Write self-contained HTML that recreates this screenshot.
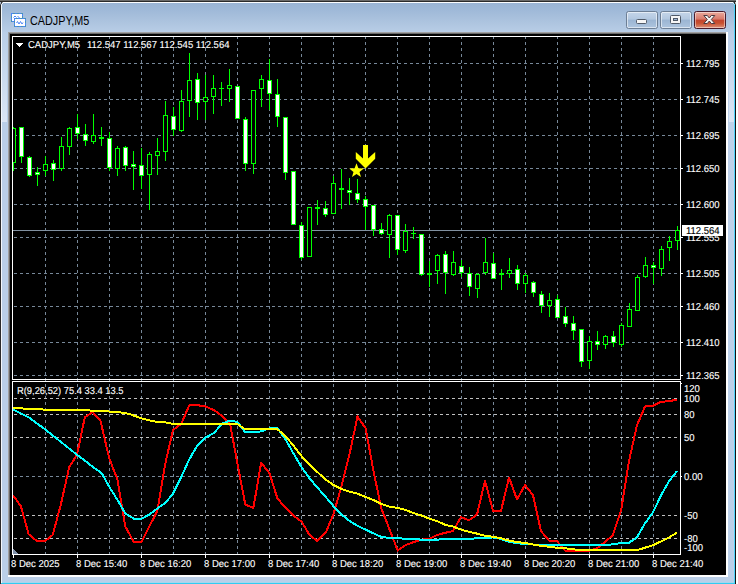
<!DOCTYPE html>
<html><head><meta charset="utf-8"><title>CADJPY,M5</title>
<style>
html,body{margin:0;padding:0;background:#fff;}
body{width:738px;height:584px;overflow:hidden;font-family:"Liberation Sans",sans-serif;}
#win{position:absolute;left:0;top:0;width:738px;height:584px;overflow:hidden;background:#bacfe8;}
#tb{position:absolute;left:0;top:0;width:738px;height:34px;background:linear-gradient(to bottom,#98b3d3 0px,#9fb9d8 10px,#adc4df 22px,#b8cde6 32px);}
.edge{position:absolute;}
#client{position:absolute;left:10px;top:34px;width:716px;height:541px;background:#000;}
.t{position:absolute;color:#fff;font-size:10px;line-height:12px;white-space:nowrap;transform-origin:0 0;transform:scaleX(0.95);text-rendering:geometricPrecision;-webkit-text-stroke:0.12px #fff;}
#title{position:absolute;left:30px;top:12px;font-size:12px;line-height:16px;color:#000;white-space:nowrap;transform-origin:0 0;transform:translateY(0.5px) scaleX(0.9);}
.btn{position:absolute;top:11px;height:18px;border-radius:2.5px;box-sizing:border-box;}
</style></head><body>
<div id="win">
<div id="tb"></div>
<!-- outer edges -->
<div class="edge" style="left:0;top:0;width:736px;height:1px;background:#6a6a6a"></div>
<div class="edge" style="left:0;top:1px;width:736px;height:1px;background:#2b2b2b"></div>
<div class="edge" style="left:2px;top:2px;width:732px;height:1px;background:#fbfdff"></div>
<div class="edge" style="left:0;top:2px;width:1px;height:582px;background:#2b2b2b"></div>
<div class="edge" style="left:1px;top:3px;width:1px;height:580px;background:#f4f8fc"></div>
<div class="edge" style="left:2px;top:32px;width:5px;height:90px;background:linear-gradient(to bottom,#b9cee7 0,#dbe6f4 100%)"></div>
<div class="edge" style="left:728px;top:34px;width:1px;height:543px;background:#bcd0ea"></div>
<div class="edge" style="left:729px;top:34px;width:4px;height:543px;background:linear-gradient(to bottom,#b9cee7 0,#dbe6f4 88px,#bed2ea 88px,#bacfe8 100%)"></div>
<div class="edge" style="left:733px;top:34px;width:1px;height:543px;background:linear-gradient(to bottom,#bccde6 0,#dfe2f0 88px,#c4d3ea 88px,#c0d0e8 100%)"></div>
<div class="edge" style="left:734px;top:3px;width:1px;height:581px;background:#4fd4fb"></div>
<div class="edge" style="left:735px;top:2px;width:1px;height:582px;background:#141414"></div>
<div class="edge" style="left:736px;top:0;width:2px;height:584px;background:#fff"></div>
<div class="edge" style="left:1px;top:583px;width:734px;height:1px;background:#30ccf2"></div>
<div class="edge" style="left:2px;top:582px;width:732px;height:1px;background:#a5d6ee"></div>
<!-- corners -->
<svg class="edge" style="left:0;top:0" width="738" height="8" viewBox="0 0 738 8" shape-rendering="crispEdges">
<rect x="0" y="2" width="1" height="1" fill="#b4c0d2"/><rect x="0" y="3" width="1" height="1" fill="#9aa6b8"/><rect x="0" y="4" width="1" height="1" fill="#555a62"/>
<rect x="1" y="2" width="1" height="1" fill="#333"/><rect x="1" y="3" width="1" height="1" fill="#4a4e55"/><rect x="1" y="4" width="1" height="1" fill="#d8e0ea"/>
<rect x="2" y="2" width="1" height="1" fill="#8a94a2"/><rect x="2" y="3" width="1" height="1" fill="#eef3f8"/>
<rect x="735" y="2" width="1" height="1" fill="#d0d0d0"/><rect x="735" y="3" width="1" height="1" fill="#9a9a9a"/><rect x="735" y="4" width="1" height="1" fill="#4a4a4a"/>
<rect x="734" y="2" width="1" height="1" fill="#333"/><rect x="734" y="3" width="1" height="1" fill="#2a3a44"/><rect x="734" y="4" width="1" height="1" fill="#7adcf8"/>
<rect x="733" y="2" width="1" height="1" fill="#8a94a2"/><rect x="733" y="3" width="1" height="1" fill="#bfeaf8"/>
</svg>
<!-- sunken client edge -->
<div class="edge" style="left:8px;top:32px;width:720px;height:545px;background:#fff"></div>
<div class="edge" style="left:8px;top:32px;width:718px;height:543px;background:#a0a0a0"></div>
<div class="edge" style="left:9px;top:33px;width:717px;height:542px;background:#696969"></div>
<div id="client"></div>
<!-- title -->
<svg class="edge" style="left:11px;top:13px" width="16" height="15" viewBox="0 0 16 15">
<rect x="0.5" y="0.5" width="11" height="8" fill="#fdfdff" stroke="#4a86f7"/>
<rect x="0.5" y="0.5" width="11" height="8" fill="none" stroke="#46a070" stroke-dasharray="1 3" stroke-dashoffset="-2"/>
<path d="M2.5 4.5 L4 3 L5.5 4.5 M6.5 3 L8.5 5" fill="none" stroke="#4a86f7" stroke-width="1"/>
<rect x="3.5" y="5.5" width="11" height="8" fill="#fdfdff" stroke="#4a86f7"/>
<rect x="3.5" y="5.5" width="11" height="8" fill="none" stroke="#46a070" stroke-dasharray="1 3" stroke-dashoffset="-2"/>
<path d="M5.5 10 L6.5 8.5 L8 11 L9.5 8.5 L11 11 L12 9.5" fill="none" stroke="#4a86f7" stroke-width="1"/>
</svg>
<div id="title">CADJPY,M5</div>
<!-- buttons -->
<div class="btn" style="left:626px;width:32px;border:1px solid #6d7f95;background:linear-gradient(to bottom,#c4d5e9 0,#b3c8e0 45%,#9bb5d3 50%,#aec5df 100%);box-shadow:inset 0 0 0 1px rgba(255,255,255,.55)"></div>
<div class="btn" style="left:660px;width:32px;border:1px solid #6d7f95;background:linear-gradient(to bottom,#c4d5e9 0,#b3c8e0 45%,#9bb5d3 50%,#aec5df 100%);box-shadow:inset 0 0 0 1px rgba(255,255,255,.55)"></div>
<div class="btn" style="left:694px;width:32px;border:1px solid #4a1a2a;background:linear-gradient(to bottom,#e9a99c 0,#d8796a 45%,#c2452f 50%,#c8502f 70%,#dc917a 100%);box-shadow:inset 0 0 0 1px rgba(255,255,255,.45)"></div>
<svg class="edge" style="left:0;top:0" width="738" height="40" viewBox="0 0 738 40">
<rect x="636.5" y="19.5" width="10" height="4" fill="#f6f6f6" stroke="#505a68" rx="1"/>
<rect x="670.5" y="15.5" width="10" height="8" fill="#f6f6f6" stroke="#505a68" rx="1"/>
<rect x="673.5" y="18.5" width="4" height="2" fill="#9db4d2" stroke="#505a68"/>
<path d="M703.8 15.5 L707.3 15.5 L709.3 18 L711.3 15.5 L714.8 15.5 L711.3 19.5 L714.8 23.5 L711.3 23.5 L709.3 21 L707.3 23.5 L703.8 23.5 L707.3 19.5 Z" fill="#f6f6f6" stroke="#4a3a40" stroke-width="1" stroke-linejoin="round"/>
</svg>
<!-- chart -->
<svg class="edge" style="left:0;top:0" width="738" height="584" viewBox="0 0 738 584" shape-rendering="crispEdges">
<line x1="14" y1="63.5" x2="680" y2="63.5" stroke="#778899" stroke-dasharray="3 3"/>
<line x1="14" y1="99.5" x2="680" y2="99.5" stroke="#778899" stroke-dasharray="3 3"/>
<line x1="14" y1="135.5" x2="680" y2="135.5" stroke="#778899" stroke-dasharray="3 3"/>
<line x1="14" y1="168.5" x2="680" y2="168.5" stroke="#778899" stroke-dasharray="3 3"/>
<line x1="14" y1="204.5" x2="680" y2="204.5" stroke="#778899" stroke-dasharray="3 3"/>
<line x1="14" y1="237.5" x2="680" y2="237.5" stroke="#778899" stroke-dasharray="3 3"/>
<line x1="14" y1="273.5" x2="680" y2="273.5" stroke="#778899" stroke-dasharray="3 3"/>
<line x1="14" y1="306.5" x2="680" y2="306.5" stroke="#778899" stroke-dasharray="3 3"/>
<line x1="14" y1="342.5" x2="680" y2="342.5" stroke="#778899" stroke-dasharray="3 3"/>
<line x1="14" y1="375.5" x2="680" y2="375.5" stroke="#778899" stroke-dasharray="3 3"/>
<line x1="45.5" y1="36" x2="45.5" y2="379" stroke="#778899" stroke-dasharray="3 3"/>
<line x1="45.5" y1="378" x2="45.5" y2="554" stroke="#778899" stroke-dasharray="3 3"/>
<line x1="77.5" y1="36" x2="77.5" y2="379" stroke="#778899" stroke-dasharray="3 3"/>
<line x1="77.5" y1="378" x2="77.5" y2="554" stroke="#778899" stroke-dasharray="3 3"/>
<line x1="109.5" y1="36" x2="109.5" y2="379" stroke="#778899" stroke-dasharray="3 3"/>
<line x1="109.5" y1="378" x2="109.5" y2="554" stroke="#778899" stroke-dasharray="3 3"/>
<line x1="141.5" y1="36" x2="141.5" y2="379" stroke="#778899" stroke-dasharray="3 3"/>
<line x1="141.5" y1="378" x2="141.5" y2="554" stroke="#778899" stroke-dasharray="3 3"/>
<line x1="173.5" y1="36" x2="173.5" y2="379" stroke="#778899" stroke-dasharray="3 3"/>
<line x1="173.5" y1="378" x2="173.5" y2="554" stroke="#778899" stroke-dasharray="3 3"/>
<line x1="205.5" y1="36" x2="205.5" y2="379" stroke="#778899" stroke-dasharray="3 3"/>
<line x1="205.5" y1="378" x2="205.5" y2="554" stroke="#778899" stroke-dasharray="3 3"/>
<line x1="237.5" y1="36" x2="237.5" y2="379" stroke="#778899" stroke-dasharray="3 3"/>
<line x1="237.5" y1="378" x2="237.5" y2="554" stroke="#778899" stroke-dasharray="3 3"/>
<line x1="269.5" y1="36" x2="269.5" y2="379" stroke="#778899" stroke-dasharray="3 3"/>
<line x1="269.5" y1="378" x2="269.5" y2="554" stroke="#778899" stroke-dasharray="3 3"/>
<line x1="301.5" y1="36" x2="301.5" y2="379" stroke="#778899" stroke-dasharray="3 3"/>
<line x1="301.5" y1="378" x2="301.5" y2="554" stroke="#778899" stroke-dasharray="3 3"/>
<line x1="333.5" y1="36" x2="333.5" y2="379" stroke="#778899" stroke-dasharray="3 3"/>
<line x1="333.5" y1="378" x2="333.5" y2="554" stroke="#778899" stroke-dasharray="3 3"/>
<line x1="365.5" y1="36" x2="365.5" y2="379" stroke="#778899" stroke-dasharray="3 3"/>
<line x1="365.5" y1="378" x2="365.5" y2="554" stroke="#778899" stroke-dasharray="3 3"/>
<line x1="397.5" y1="36" x2="397.5" y2="379" stroke="#778899" stroke-dasharray="3 3"/>
<line x1="397.5" y1="378" x2="397.5" y2="554" stroke="#778899" stroke-dasharray="3 3"/>
<line x1="429.5" y1="36" x2="429.5" y2="379" stroke="#778899" stroke-dasharray="3 3"/>
<line x1="429.5" y1="378" x2="429.5" y2="554" stroke="#778899" stroke-dasharray="3 3"/>
<line x1="461.5" y1="36" x2="461.5" y2="379" stroke="#778899" stroke-dasharray="3 3"/>
<line x1="461.5" y1="378" x2="461.5" y2="554" stroke="#778899" stroke-dasharray="3 3"/>
<line x1="493.5" y1="36" x2="493.5" y2="379" stroke="#778899" stroke-dasharray="3 3"/>
<line x1="493.5" y1="378" x2="493.5" y2="554" stroke="#778899" stroke-dasharray="3 3"/>
<line x1="525.5" y1="36" x2="525.5" y2="379" stroke="#778899" stroke-dasharray="3 3"/>
<line x1="525.5" y1="378" x2="525.5" y2="554" stroke="#778899" stroke-dasharray="3 3"/>
<line x1="557.5" y1="36" x2="557.5" y2="379" stroke="#778899" stroke-dasharray="3 3"/>
<line x1="557.5" y1="378" x2="557.5" y2="554" stroke="#778899" stroke-dasharray="3 3"/>
<line x1="589.5" y1="36" x2="589.5" y2="379" stroke="#778899" stroke-dasharray="3 3"/>
<line x1="589.5" y1="378" x2="589.5" y2="554" stroke="#778899" stroke-dasharray="3 3"/>
<line x1="621.5" y1="36" x2="621.5" y2="379" stroke="#778899" stroke-dasharray="3 3"/>
<line x1="621.5" y1="378" x2="621.5" y2="554" stroke="#778899" stroke-dasharray="3 3"/>
<line x1="653.5" y1="36" x2="653.5" y2="379" stroke="#778899" stroke-dasharray="3 3"/>
<line x1="653.5" y1="378" x2="653.5" y2="554" stroke="#778899" stroke-dasharray="3 3"/>
<line x1="14" y1="398.5" x2="680" y2="398.5" stroke="#c0c0c0" stroke-dasharray="3 3"/>
<line x1="14" y1="414.5" x2="680" y2="414.5" stroke="#c0c0c0" stroke-dasharray="3 3"/>
<line x1="14" y1="437.5" x2="680" y2="437.5" stroke="#c0c0c0" stroke-dasharray="3 3"/>
<line x1="14" y1="476.5" x2="680" y2="476.5" stroke="#778899" stroke-dasharray="3 3"/>
<line x1="14" y1="515.5" x2="680" y2="515.5" stroke="#c0c0c0" stroke-dasharray="3 3"/>
<line x1="14" y1="538.5" x2="680" y2="538.5" stroke="#c0c0c0" stroke-dasharray="3 3"/>
<rect x="13" y="230" width="667" height="1" fill="#8090a0"/>
<rect x="13" y="127" width="1" height="44" fill="#00ff00"/>
<rect x="13" y="128" width="3" height="35" fill="#00ff00"/>
<rect x="13" y="129" width="2" height="33" fill="#000"/>
<rect x="21" y="127" width="1" height="36" fill="#00ff00"/>
<rect x="19" y="127" width="5" height="30" fill="#00ff00"/>
<rect x="20" y="128" width="3" height="28" fill="#fff"/>
<rect x="29" y="156" width="1" height="21" fill="#00ff00"/>
<rect x="27" y="157" width="5" height="19" fill="#00ff00"/>
<rect x="28" y="158" width="3" height="17" fill="#fff"/>
<rect x="37" y="167" width="1" height="19" fill="#00ff00"/>
<rect x="35" y="172" width="5" height="3" fill="#00ff00"/>
<rect x="36" y="173" width="3" height="1" fill="#fff"/>
<rect x="45" y="156" width="1" height="20" fill="#00ff00"/>
<rect x="43" y="164" width="5" height="7" fill="#00ff00"/>
<rect x="44" y="165" width="3" height="5" fill="#000"/>
<rect x="53" y="160" width="1" height="21" fill="#00ff00"/>
<rect x="51" y="163" width="5" height="7" fill="#00ff00"/>
<rect x="52" y="164" width="3" height="5" fill="#fff"/>
<rect x="61" y="137" width="1" height="34" fill="#00ff00"/>
<rect x="59" y="146" width="5" height="23" fill="#00ff00"/>
<rect x="60" y="147" width="3" height="21" fill="#000"/>
<rect x="69" y="127" width="1" height="28" fill="#00ff00"/>
<rect x="67" y="128" width="5" height="19" fill="#00ff00"/>
<rect x="68" y="129" width="3" height="17" fill="#000"/>
<rect x="77" y="114" width="1" height="25" fill="#00ff00"/>
<rect x="75" y="127" width="5" height="7" fill="#00ff00"/>
<rect x="76" y="128" width="3" height="5" fill="#fff"/>
<rect x="85" y="124" width="1" height="22" fill="#00ff00"/>
<rect x="83" y="134" width="5" height="7" fill="#00ff00"/>
<rect x="84" y="135" width="3" height="5" fill="#fff"/>
<rect x="93" y="114" width="1" height="30" fill="#00ff00"/>
<rect x="91" y="135" width="5" height="7" fill="#00ff00"/>
<rect x="92" y="136" width="3" height="5" fill="#000"/>
<rect x="101" y="127" width="1" height="19" fill="#00ff00"/>
<rect x="99" y="137" width="5" height="2" fill="#00ff00"/>
<rect x="109" y="132" width="1" height="39" fill="#00ff00"/>
<rect x="107" y="138" width="5" height="30" fill="#00ff00"/>
<rect x="108" y="139" width="3" height="28" fill="#fff"/>
<rect x="117" y="146" width="1" height="30" fill="#00ff00"/>
<rect x="115" y="148" width="5" height="21" fill="#00ff00"/>
<rect x="116" y="149" width="3" height="19" fill="#000"/>
<rect x="125" y="146" width="1" height="25" fill="#00ff00"/>
<rect x="123" y="147" width="5" height="19" fill="#00ff00"/>
<rect x="124" y="148" width="3" height="17" fill="#fff"/>
<rect x="133" y="151" width="1" height="39" fill="#00ff00"/>
<rect x="131" y="164" width="5" height="3" fill="#00ff00"/>
<rect x="132" y="165" width="3" height="1" fill="#fff"/>
<rect x="141" y="148" width="1" height="41" fill="#00ff00"/>
<rect x="139" y="165" width="5" height="11" fill="#00ff00"/>
<rect x="140" y="166" width="3" height="9" fill="#fff"/>
<rect x="149" y="152" width="1" height="58" fill="#00ff00"/>
<rect x="147" y="154" width="5" height="21" fill="#00ff00"/>
<rect x="148" y="155" width="3" height="19" fill="#000"/>
<rect x="157" y="138" width="1" height="37" fill="#00ff00"/>
<rect x="155" y="151" width="5" height="5" fill="#00ff00"/>
<rect x="156" y="152" width="3" height="3" fill="#000"/>
<rect x="165" y="101" width="1" height="60" fill="#00ff00"/>
<rect x="163" y="115" width="5" height="37" fill="#00ff00"/>
<rect x="164" y="116" width="3" height="35" fill="#000"/>
<rect x="173" y="107" width="1" height="29" fill="#00ff00"/>
<rect x="171" y="116" width="5" height="14" fill="#00ff00"/>
<rect x="172" y="117" width="3" height="12" fill="#fff"/>
<rect x="181" y="90" width="1" height="42" fill="#00ff00"/>
<rect x="179" y="101" width="5" height="30" fill="#00ff00"/>
<rect x="180" y="102" width="3" height="28" fill="#000"/>
<rect x="189" y="53" width="1" height="64" fill="#00ff00"/>
<rect x="187" y="80" width="5" height="21" fill="#00ff00"/>
<rect x="188" y="81" width="3" height="19" fill="#000"/>
<rect x="197" y="73" width="1" height="47" fill="#00ff00"/>
<rect x="195" y="79" width="5" height="24" fill="#00ff00"/>
<rect x="196" y="80" width="3" height="22" fill="#fff"/>
<rect x="205" y="75" width="1" height="45" fill="#00ff00"/>
<rect x="203" y="97" width="5" height="5" fill="#00ff00"/>
<rect x="204" y="98" width="3" height="3" fill="#000"/>
<rect x="213" y="75" width="1" height="39" fill="#00ff00"/>
<rect x="211" y="88" width="5" height="9" fill="#00ff00"/>
<rect x="212" y="89" width="3" height="7" fill="#000"/>
<rect x="221" y="82" width="1" height="24" fill="#00ff00"/>
<rect x="219" y="88" width="5" height="1" fill="#00ff00"/>
<rect x="229" y="69" width="1" height="33" fill="#00ff00"/>
<rect x="227" y="85" width="5" height="4" fill="#00ff00"/>
<rect x="228" y="86" width="3" height="2" fill="#000"/>
<rect x="237" y="86" width="1" height="33" fill="#00ff00"/>
<rect x="235" y="86" width="5" height="33" fill="#00ff00"/>
<rect x="236" y="87" width="3" height="31" fill="#fff"/>
<rect x="245" y="117" width="1" height="54" fill="#00ff00"/>
<rect x="243" y="119" width="5" height="45" fill="#00ff00"/>
<rect x="244" y="120" width="3" height="43" fill="#fff"/>
<rect x="253" y="90" width="1" height="84" fill="#00ff00"/>
<rect x="251" y="90" width="5" height="74" fill="#00ff00"/>
<rect x="252" y="91" width="3" height="72" fill="#000"/>
<rect x="261" y="75" width="1" height="32" fill="#00ff00"/>
<rect x="259" y="79" width="5" height="10" fill="#00ff00"/>
<rect x="260" y="80" width="3" height="8" fill="#000"/>
<rect x="269" y="59" width="1" height="51" fill="#00ff00"/>
<rect x="267" y="80" width="5" height="14" fill="#00ff00"/>
<rect x="268" y="81" width="3" height="12" fill="#fff"/>
<rect x="277" y="79" width="1" height="48" fill="#00ff00"/>
<rect x="275" y="94" width="5" height="23" fill="#00ff00"/>
<rect x="276" y="95" width="3" height="21" fill="#fff"/>
<rect x="285" y="117" width="1" height="63" fill="#00ff00"/>
<rect x="283" y="117" width="5" height="56" fill="#00ff00"/>
<rect x="284" y="118" width="3" height="54" fill="#fff"/>
<rect x="293" y="171" width="1" height="54" fill="#00ff00"/>
<rect x="291" y="171" width="5" height="54" fill="#00ff00"/>
<rect x="292" y="172" width="3" height="52" fill="#fff"/>
<rect x="301" y="222" width="1" height="38" fill="#00ff00"/>
<rect x="299" y="225" width="5" height="33" fill="#00ff00"/>
<rect x="300" y="226" width="3" height="31" fill="#fff"/>
<rect x="309" y="207" width="1" height="50" fill="#00ff00"/>
<rect x="307" y="207" width="5" height="50" fill="#00ff00"/>
<rect x="308" y="208" width="3" height="48" fill="#000"/>
<rect x="317" y="200" width="1" height="25" fill="#00ff00"/>
<rect x="315" y="207" width="5" height="2" fill="#00ff00"/>
<rect x="325" y="201" width="1" height="16" fill="#00ff00"/>
<rect x="323" y="208" width="5" height="7" fill="#00ff00"/>
<rect x="324" y="209" width="3" height="5" fill="#fff"/>
<rect x="333" y="176" width="1" height="38" fill="#00ff00"/>
<rect x="331" y="183" width="5" height="31" fill="#00ff00"/>
<rect x="332" y="184" width="3" height="29" fill="#000"/>
<rect x="341" y="169" width="1" height="40" fill="#00ff00"/>
<rect x="339" y="188" width="5" height="2" fill="#00ff00"/>
<rect x="349" y="178" width="1" height="27" fill="#00ff00"/>
<rect x="347" y="190" width="5" height="3" fill="#00ff00"/>
<rect x="348" y="191" width="3" height="1" fill="#fff"/>
<rect x="357" y="179" width="1" height="24" fill="#00ff00"/>
<rect x="355" y="193" width="5" height="7" fill="#00ff00"/>
<rect x="356" y="194" width="3" height="5" fill="#fff"/>
<rect x="365" y="196" width="1" height="34" fill="#00ff00"/>
<rect x="363" y="199" width="5" height="8" fill="#00ff00"/>
<rect x="364" y="200" width="3" height="6" fill="#fff"/>
<rect x="373" y="205" width="1" height="31" fill="#00ff00"/>
<rect x="371" y="205" width="5" height="25" fill="#00ff00"/>
<rect x="372" y="206" width="3" height="23" fill="#fff"/>
<rect x="381" y="223" width="1" height="12" fill="#00ff00"/>
<rect x="379" y="229" width="5" height="5" fill="#00ff00"/>
<rect x="380" y="230" width="3" height="3" fill="#fff"/>
<rect x="389" y="214" width="1" height="44" fill="#00ff00"/>
<rect x="387" y="215" width="5" height="20" fill="#00ff00"/>
<rect x="388" y="216" width="3" height="18" fill="#000"/>
<rect x="397" y="215" width="1" height="40" fill="#00ff00"/>
<rect x="395" y="215" width="5" height="35" fill="#00ff00"/>
<rect x="396" y="216" width="3" height="33" fill="#fff"/>
<rect x="405" y="224" width="1" height="29" fill="#00ff00"/>
<rect x="403" y="231" width="5" height="20" fill="#00ff00"/>
<rect x="404" y="232" width="3" height="18" fill="#000"/>
<rect x="413" y="227" width="1" height="12" fill="#00ff00"/>
<rect x="411" y="233" width="5" height="1" fill="#00ff00"/>
<rect x="421" y="234" width="1" height="42" fill="#00ff00"/>
<rect x="419" y="234" width="5" height="41" fill="#00ff00"/>
<rect x="420" y="235" width="3" height="39" fill="#fff"/>
<rect x="429" y="261" width="1" height="26" fill="#00ff00"/>
<rect x="427" y="273" width="5" height="2" fill="#00ff00"/>
<rect x="437" y="254" width="1" height="30" fill="#00ff00"/>
<rect x="435" y="255" width="5" height="16" fill="#00ff00"/>
<rect x="436" y="256" width="3" height="14" fill="#000"/>
<rect x="445" y="251" width="1" height="43" fill="#00ff00"/>
<rect x="443" y="254" width="5" height="19" fill="#00ff00"/>
<rect x="444" y="255" width="3" height="17" fill="#fff"/>
<rect x="453" y="251" width="1" height="25" fill="#00ff00"/>
<rect x="451" y="262" width="5" height="13" fill="#00ff00"/>
<rect x="452" y="263" width="3" height="11" fill="#000"/>
<rect x="461" y="260" width="1" height="17" fill="#00ff00"/>
<rect x="459" y="266" width="5" height="7" fill="#00ff00"/>
<rect x="460" y="267" width="3" height="5" fill="#fff"/>
<rect x="469" y="267" width="1" height="29" fill="#00ff00"/>
<rect x="467" y="273" width="5" height="14" fill="#00ff00"/>
<rect x="468" y="274" width="3" height="12" fill="#fff"/>
<rect x="477" y="273" width="1" height="25" fill="#00ff00"/>
<rect x="475" y="274" width="5" height="15" fill="#00ff00"/>
<rect x="476" y="275" width="3" height="13" fill="#000"/>
<rect x="485" y="238" width="1" height="37" fill="#00ff00"/>
<rect x="483" y="262" width="5" height="11" fill="#00ff00"/>
<rect x="484" y="263" width="3" height="9" fill="#000"/>
<rect x="493" y="253" width="1" height="26" fill="#00ff00"/>
<rect x="491" y="263" width="5" height="16" fill="#00ff00"/>
<rect x="492" y="264" width="3" height="14" fill="#fff"/>
<rect x="501" y="269" width="1" height="21" fill="#00ff00"/>
<rect x="499" y="273" width="5" height="2" fill="#00ff00"/>
<rect x="509" y="258" width="1" height="20" fill="#00ff00"/>
<rect x="507" y="270" width="5" height="4" fill="#00ff00"/>
<rect x="508" y="271" width="3" height="2" fill="#000"/>
<rect x="517" y="265" width="1" height="25" fill="#00ff00"/>
<rect x="515" y="269" width="5" height="15" fill="#00ff00"/>
<rect x="516" y="270" width="3" height="13" fill="#fff"/>
<rect x="525" y="273" width="1" height="20" fill="#00ff00"/>
<rect x="523" y="275" width="5" height="9" fill="#00ff00"/>
<rect x="524" y="276" width="3" height="7" fill="#000"/>
<rect x="533" y="281" width="1" height="16" fill="#00ff00"/>
<rect x="531" y="282" width="5" height="11" fill="#00ff00"/>
<rect x="532" y="283" width="3" height="9" fill="#fff"/>
<rect x="541" y="291" width="1" height="22" fill="#00ff00"/>
<rect x="539" y="294" width="5" height="12" fill="#00ff00"/>
<rect x="540" y="295" width="3" height="10" fill="#fff"/>
<rect x="549" y="293" width="1" height="24" fill="#00ff00"/>
<rect x="547" y="300" width="5" height="6" fill="#00ff00"/>
<rect x="548" y="301" width="3" height="4" fill="#000"/>
<rect x="557" y="295" width="1" height="23" fill="#00ff00"/>
<rect x="555" y="299" width="5" height="19" fill="#00ff00"/>
<rect x="556" y="300" width="3" height="17" fill="#fff"/>
<rect x="565" y="307" width="1" height="20" fill="#00ff00"/>
<rect x="563" y="316" width="5" height="8" fill="#00ff00"/>
<rect x="564" y="317" width="3" height="6" fill="#fff"/>
<rect x="573" y="316" width="1" height="24" fill="#00ff00"/>
<rect x="571" y="323" width="5" height="8" fill="#00ff00"/>
<rect x="572" y="324" width="3" height="6" fill="#fff"/>
<rect x="581" y="329" width="1" height="38" fill="#00ff00"/>
<rect x="579" y="329" width="5" height="33" fill="#00ff00"/>
<rect x="580" y="330" width="3" height="31" fill="#fff"/>
<rect x="589" y="336" width="1" height="33" fill="#00ff00"/>
<rect x="587" y="341" width="5" height="20" fill="#00ff00"/>
<rect x="588" y="342" width="3" height="18" fill="#000"/>
<rect x="597" y="331" width="1" height="19" fill="#00ff00"/>
<rect x="595" y="341" width="5" height="4" fill="#00ff00"/>
<rect x="596" y="342" width="3" height="2" fill="#fff"/>
<rect x="605" y="335" width="1" height="14" fill="#00ff00"/>
<rect x="603" y="336" width="5" height="9" fill="#00ff00"/>
<rect x="604" y="337" width="3" height="7" fill="#000"/>
<rect x="613" y="331" width="1" height="16" fill="#00ff00"/>
<rect x="611" y="336" width="5" height="7" fill="#00ff00"/>
<rect x="612" y="337" width="3" height="5" fill="#fff"/>
<rect x="621" y="323" width="1" height="24" fill="#00ff00"/>
<rect x="619" y="325" width="5" height="20" fill="#00ff00"/>
<rect x="620" y="326" width="3" height="18" fill="#000"/>
<rect x="629" y="303" width="1" height="24" fill="#00ff00"/>
<rect x="627" y="309" width="5" height="18" fill="#00ff00"/>
<rect x="628" y="310" width="3" height="16" fill="#000"/>
<rect x="637" y="275" width="1" height="36" fill="#00ff00"/>
<rect x="635" y="277" width="5" height="34" fill="#00ff00"/>
<rect x="636" y="278" width="3" height="32" fill="#000"/>
<rect x="645" y="257" width="1" height="21" fill="#00ff00"/>
<rect x="643" y="265" width="5" height="12" fill="#00ff00"/>
<rect x="644" y="266" width="3" height="10" fill="#000"/>
<rect x="653" y="262" width="1" height="22" fill="#00ff00"/>
<rect x="651" y="265" width="5" height="3" fill="#00ff00"/>
<rect x="652" y="266" width="3" height="1" fill="#fff"/>
<rect x="661" y="246" width="1" height="30" fill="#00ff00"/>
<rect x="659" y="249" width="5" height="20" fill="#00ff00"/>
<rect x="660" y="250" width="3" height="18" fill="#000"/>
<rect x="669" y="236" width="1" height="25" fill="#00ff00"/>
<rect x="667" y="241" width="5" height="7" fill="#00ff00"/>
<rect x="668" y="242" width="3" height="5" fill="#000"/>
<rect x="677" y="226" width="1" height="24" fill="#00ff00"/>
<rect x="675" y="230" width="5" height="11" fill="#00ff00"/>
<rect x="676" y="231" width="3" height="9" fill="#000"/>
<rect x="12.5" y="36.5" width="668" height="343" fill="none" stroke="#fff"/>
<rect x="12.5" y="381.5" width="668" height="173" fill="none" stroke="#fff"/>
<rect x="681" y="63" width="2" height="1" fill="#fff"/>
<rect x="681" y="99" width="2" height="1" fill="#fff"/>
<rect x="681" y="135" width="2" height="1" fill="#fff"/>
<rect x="681" y="168" width="2" height="1" fill="#fff"/>
<rect x="681" y="204" width="2" height="1" fill="#fff"/>
<rect x="681" y="237" width="2" height="1" fill="#fff"/>
<rect x="681" y="273" width="2" height="1" fill="#fff"/>
<rect x="681" y="306" width="2" height="1" fill="#fff"/>
<rect x="681" y="342" width="2" height="1" fill="#fff"/>
<rect x="681" y="375" width="2" height="1" fill="#fff"/>
<rect x="681" y="383" width="1" height="1" fill="#fff"/>
<rect x="681" y="476" width="1" height="1" fill="#fff"/>
<rect x="13" y="555" width="1" height="3" fill="#fff"/>
<rect x="77" y="555" width="1" height="3" fill="#fff"/>
<rect x="141" y="555" width="1" height="3" fill="#fff"/>
<rect x="205" y="555" width="1" height="3" fill="#fff"/>
<rect x="269" y="555" width="1" height="3" fill="#fff"/>
<rect x="333" y="555" width="1" height="3" fill="#fff"/>
<rect x="397" y="555" width="1" height="3" fill="#fff"/>
<rect x="461" y="555" width="1" height="3" fill="#fff"/>
<rect x="525" y="555" width="1" height="3" fill="#fff"/>
<rect x="589" y="555" width="1" height="3" fill="#fff"/>
<rect x="653" y="555" width="1" height="3" fill="#fff"/>
<path d="M16 43h7l-3.5 4z" fill="#fff"/>
<rect x="682" y="225" width="41" height="11" fill="#fff"/>
<path d="M13 549 L13 554 L18 554 Z" fill="#8090a8"/>
</svg>
<svg class="edge" style="left:0;top:0" width="738" height="584" viewBox="0 0 738 584">
<clipPath id="cp"><rect x="13" y="382" width="667" height="172"/></clipPath>
<g clip-path="url(#cp)" shape-rendering="crispEdges">
<polyline points="13.1,495.3 20.9,506.2 28.7,534.3 36.5,540.7 44.9,541.2 52.7,534.9 60.8,504.7 69.2,467.3 77.0,454.8 84.8,417.4 92.6,412.1 100.4,420.5 109.1,457.9 117.5,479.7 125.3,526.5 133.7,541.9 141.5,541.9 149.3,526.5 157.4,510.9 165.2,464.1 173.0,429.9 181.4,423.6 189.2,405.4 197.0,405.1 205.4,406.5 214.1,410.2 221.9,415.8 230.0,423.6 237.5,464.1 245.3,504.7 253.4,507.8 261.2,462.6 269.6,473.5 277.4,498.4 285.5,507.8 293.3,515.6 301.7,521.8 309.5,534.9 317.3,541.1 325.7,532.7 333.5,514.0 341.6,486.0 349.4,454.8 357.5,416.5 365.6,428.3 373.4,470.4 381.1,507.8 389.6,529.6 397.7,550.5 405.5,545.2 413.9,542.0 421.7,539.6 429.5,538.9 437.2,534.9 445.6,532.7 453.0,531.1 461.0,517.1 469.0,520.2 477.0,514.6 485.0,480.7 493.0,510.9 501.0,510.9 509.0,477.5 517.0,499.4 525.0,485.0 533.0,495.3 541.0,531.1 549.0,540.5 557.0,541.1 565.0,550.5 573.0,550.5 581.0,550.8 589.0,550.8 597.0,548.3 605.0,542.0 613.0,534.9 621.0,510.9 629.0,461.0 637.0,425.2 645.0,406.5 653.0,405.9 661.0,401.8 669.0,401.2 677.0,399.6" fill="none" stroke="#ff0000" stroke-width="2" stroke-linejoin="round" stroke-linecap="butt"/>
<polyline points="13.0,409.6 28.7,417.4 44.9,429.2 60.8,441.8 77.0,454.8 92.6,466.6 101.9,473.5 109.7,487.5 117.5,500.0 125.3,513.4 133.7,518.7 141.5,518.7 149.3,514.6 157.4,508.4 165.2,503.1 173.0,493.7 181.4,476.6 189.2,459.5 197.0,446.0 205.4,437.6 214.1,433.0 221.9,423.6 230.0,420.5 237.5,422.0 245.3,432.4 253.4,432.4 261.2,431.4 269.6,428.3 277.4,428.3 285.5,439.2 293.3,453.2 301.7,467.3 309.5,478.2 317.3,487.5 325.7,496.9 333.5,506.2 341.6,514.6 349.4,520.9 357.5,525.8 365.6,529.6 373.4,533.3 381.1,536.8 389.6,538.0 397.7,538.0 405.5,538.9 421.7,539.6 437.2,539.6 453.0,538.9 485.0,538.3 493.0,537.4 501.0,538.9 509.0,542.0 517.0,543.0 525.0,544.2 533.0,544.5 541.0,545.2 605.0,545.2 613.0,544.2 621.0,543.0 629.0,542.7 637.0,537.4 645.0,523.3 653.0,512.4 661.0,495.3 669.0,481.3 677.0,471.0" fill="none" stroke="#00ffff" stroke-width="2" stroke-linejoin="round" stroke-linecap="butt"/>
<polyline points="13.0,408.0 45.0,409.6 84.8,410.2 117.5,412.0 128.4,413.7 141.5,418.3 153.3,421.4 165.2,422.4 173.0,423.9 230.0,423.9 237.5,424.3 245.3,429.2 253.4,429.2 269.6,429.2 277.4,429.2 285.5,436.1 293.3,445.4 301.7,456.3 309.5,464.1 317.3,471.9 325.7,479.7 333.5,485.0 341.6,489.1 349.4,491.6 357.5,493.7 365.6,496.9 373.4,500.0 381.1,503.7 389.6,506.8 397.7,507.8 405.5,510.0 413.9,513.1 421.7,515.6 429.5,518.7 437.2,521.2 445.6,524.9 453.0,526.5 461.0,529.6 469.0,531.8 477.0,533.6 485.0,535.8 493.0,536.7 501.0,538.3 509.0,540.5 517.0,542.0 525.0,543.0 533.0,544.5 541.0,545.8 549.0,546.7 557.0,547.7 565.0,548.3 573.0,549.2 581.0,550.2 637.0,550.2 645.0,547.7 653.0,545.2 661.0,541.4 669.0,537.4 677.0,532.7" fill="none" stroke="#ffff00" stroke-width="2" stroke-linejoin="round" stroke-linecap="butt"/>
</g>
<!-- arrow -->
<path d="M363 145 L368 145 L368 158.5 L375.2 152 L375.2 158.8 L365.5 168.4 L355.8 158.8 L355.8 152 L363 158.5 Z" fill="#ffff00"/>
<!-- star -->
<path d="M356.5 163.2 L358.4 168.3 L363.8 168.5 L359.5 171.9 L361.0 177.1 L356.5 174.1 L352.0 177.1 L353.5 171.9 L349.2 168.5 L354.6 168.3 Z" fill="#ffff00"/>
</svg>
<div class="t" style="left:686px;top:59px">112.795</div>
<div class="t" style="left:686px;top:95px">112.745</div>
<div class="t" style="left:686px;top:131px">112.695</div>
<div class="t" style="left:686px;top:164px">112.650</div>
<div class="t" style="left:686px;top:200px">112.600</div>
<div class="t" style="left:686px;top:233px">112.555</div>
<div class="t" style="left:686px;top:269px">112.505</div>
<div class="t" style="left:686px;top:302px">112.460</div>
<div class="t" style="left:686px;top:338px">112.410</div>
<div class="t" style="left:686px;top:371px">112.365</div>
<div class="t" style="left:684px;top:384px">120</div>
<div class="t" style="left:684px;top:394px">100</div>
<div class="t" style="left:684px;top:410px">80</div>
<div class="t" style="left:684px;top:433px">50</div>
<div class="t" style="left:684px;top:472px">0.00</div>
<div class="t" style="left:684px;top:511px">-50</div>
<div class="t" style="left:684px;top:534px">-80</div>
<div class="t" style="left:684px;top:543px">-100</div>
<div class="t" style="left:11px;top:559px">8 Dec 2025</div>
<div class="t" style="left:76px;top:559px">8 Dec 15:40</div>
<div class="t" style="left:140px;top:559px">8 Dec 16:20</div>
<div class="t" style="left:204px;top:559px">8 Dec 17:00</div>
<div class="t" style="left:268px;top:559px">8 Dec 17:40</div>
<div class="t" style="left:332px;top:559px">8 Dec 18:20</div>
<div class="t" style="left:396px;top:559px">8 Dec 19:00</div>
<div class="t" style="left:460px;top:559px">8 Dec 19:40</div>
<div class="t" style="left:524px;top:559px">8 Dec 20:20</div>
<div class="t" style="left:588px;top:559px">8 Dec 21:00</div>
<div class="t" style="left:652px;top:559px">8 Dec 21:40</div>
<div class="t" style="left:28px;top:40px">CADJPY,M5</div>
<div class="t" style="left:86.5px;top:40px">112.547 112.567 112.545 112.564</div>
<div class="t" style="left:17px;top:386px;transform:scaleX(0.935)">R(9,26,52) 75.4 33.4 13.5</div>
<div class="t" style="left:686px;top:226px;color:#000;-webkit-text-stroke:0.12px #000">112.564</div>
</div>
</body></html>
